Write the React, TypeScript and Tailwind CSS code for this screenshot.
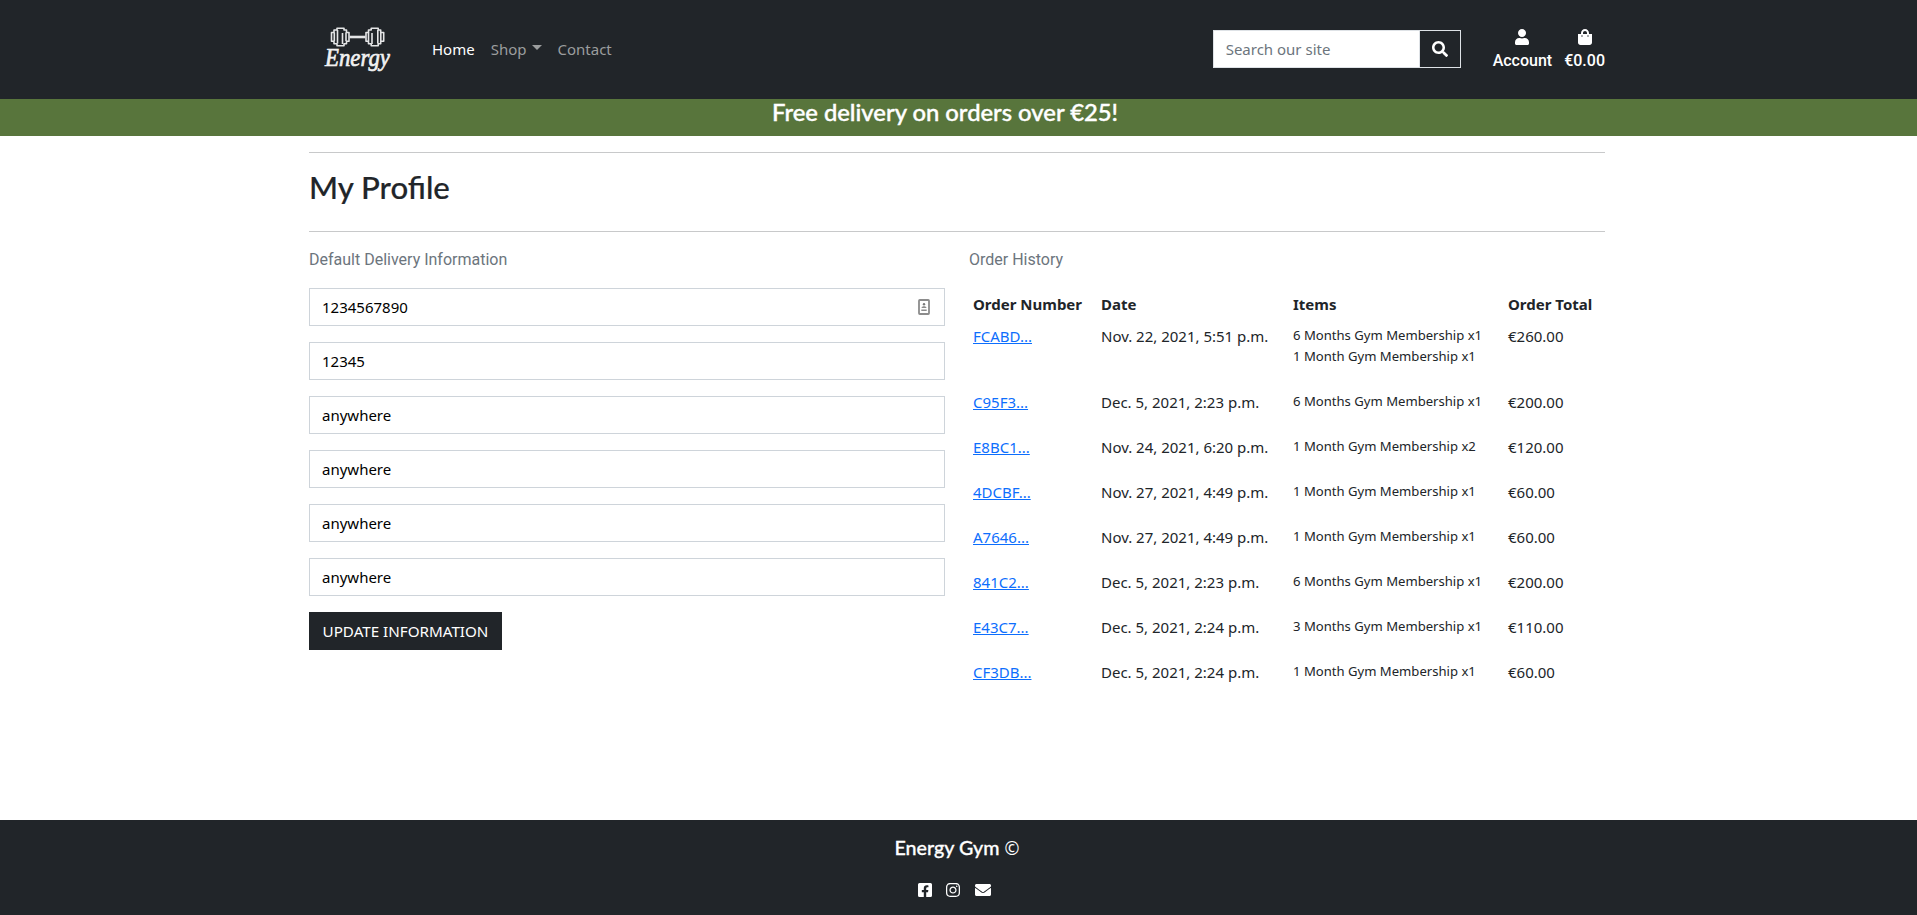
import { FaUser, FaShoppingBag, FaSearch, FaFacebookSquare, FaInstagram, FaEnvelope } from "react-icons/fa";

const fields = ["1234567890", "12345", "anywhere", "anywhere", "anywhere", "anywhere"];

const orders = [
  { id: "FCABD...", date: "Nov. 22, 2021, 5:51 p.m.", items: ["6 Months Gym Membership x1", "1 Month Gym Membership x1"], total: "€260.00" },
  { id: "C95F3...", date: "Dec. 5, 2021, 2:23 p.m.", items: ["6 Months Gym Membership x1"], total: "€200.00" },
  { id: "E8BC1...", date: "Nov. 24, 2021, 6:20 p.m.", items: ["1 Month Gym Membership x2"], total: "€120.00" },
  { id: "4DCBF...", date: "Nov. 27, 2021, 4:49 p.m.", items: ["1 Month Gym Membership x1"], total: "€60.00" },
  { id: "A7646...", date: "Nov. 27, 2021, 4:49 p.m.", items: ["1 Month Gym Membership x1"], total: "€60.00" },
  { id: "841C2...", date: "Dec. 5, 2021, 2:23 p.m.", items: ["6 Months Gym Membership x1"], total: "€200.00" },
  { id: "E43C7...", date: "Dec. 5, 2021, 2:24 p.m.", items: ["3 Months Gym Membership x1"], total: "€110.00" },
  { id: "CF3DB...", date: "Dec. 5, 2021, 2:24 p.m.", items: ["1 Month Gym Membership x1"], total: "€60.00" },
];

function Logo() {
  return (
    <svg width="74" height="60" viewBox="0 0 74 60" className="block overflow-visible" aria-label="Energy">
      <g fill="none" stroke="#e4e5e6" strokeWidth="1.6" strokeLinejoin="round">
        <path d="M11.5 12.5H14V10h3V8.3h7V10h2.5v2.5h2.5v8.7H26.500v2.500H24v2h-7v-2h-3v-2.500h-2.500z" />
        <path d="M14.300 12.500v8.500M17.500 10v13.500M22.500 13v11M26 12.500v8.500" />
        <path d="M46 12.500h2.500V10h2.700V8.300h7V10h2.500v2.500h3v8.700h-3v2.500h-2.500v2h-7v-2h-2.700v-2.500H46z" />
        <path d="M48.500 12.500v8.500M52 13v11M57.800 10v13.500M60.800 12.500v8.500" />
      </g>
      <path d="M29.500 17h16" stroke="#e4e5e6" strokeWidth="2.600" />
      <text
        x="5"
        y="45.500"
        textLength="65"
        lengthAdjust="spacingAndGlyphs"
        className="fill-[#f1f1f1] stroke-[#f1f1f1] font-['Liberation_Serif',serif] text-[26px] italic"
        strokeWidth="0.700"
      >
        Energy
      </text>
    </svg>
  );
}

function Header() {
  return (
    <header className="flex h-[99px] items-center bg-[#212529] pr-[312px] pl-[320px] text-[15px]">
      <Logo />
      <nav className="ml-[38px] flex items-center gap-4 text-[#9b9d9e]">
        <a className="text-white">Home</a>
        <a className="flex items-center">
          Shop
          <span className="mb-1 ml-[5px] h-0 w-0 border-x-[5px] border-t-[5px] border-x-transparent border-t-[#9b9d9e]" />
        </a>
        <a>Contact</a>
      </nav>
      <form className="mb-px ml-auto flex h-[38px] w-[248px] border border-[#dee2e6]">
        <input
          className="w-[205px] bg-white px-3 outline-none placeholder:text-[#6c757d]"
          placeholder="Search our site"
        />
        <button type="button" className="flex flex-1 items-center justify-center border-l border-[#dee2e6] text-white">
          <FaSearch size={16} />
        </button>
      </form>
      <div className="mb-0.5 ml-8 flex gap-3 font-['Roboto',sans-serif] text-base font-medium text-white">
        <a className="flex flex-col items-center leading-6">
          <FaUser size={16} className="mt-1 mb-1" />
          Account
        </a>
        <a className="flex flex-col items-center leading-6">
          <FaShoppingBag size={16} className="mt-1 mb-1" />
          €0.00
        </a>
      </div>
    </header>
  );
}

function ContactCardIcon() {
  return (
    <svg width="12" height="16" viewBox="0 0 12 16">
      <rect x="1" y="1" width="10" height="14" rx="0.800" fill="none" stroke="#8c8c8c" strokeWidth="1.800" />
      <circle cx="6" cy="5.300" r="1.200" fill="#777" />
      <path d="M3.500 9c0-2.500 5-2.500 5 0zM3.300 10.500h5.400v1.600H3.300z" fill="#8c8c8c" />
    </svg>
  );
}

export default function App() {
  return (
    <div className="flex h-[915px] flex-col bg-white font-['Noto_Sans','Open_Sans',sans-serif] text-[15px] text-[#212529]">
      <Header />
      <div className="h-[37px] bg-[#58753c] pr-[27px] text-center font-['Lato',sans-serif] text-[23.800px] leading-[27px] font-medium text-white [-webkit-text-stroke:0.4px]">
        Free delivery on orders over €25!
      </div>

      <main className="flex-1 pr-[312px] pl-[309px] pt-4">
        <hr className="border-t border-[#c8c9ca]" />
        <h2 className="mt-4 h-[62px] font-['Lato',sans-serif] text-[31.200px] leading-[36px] font-medium [-webkit-text-stroke:0.2px]">
          My Profile
        </h2>
        <hr className="border-t border-[#c8c9ca]" />

        <div className="mt-4 flex gap-6">
          <section className="w-[636px]">
            <p className="mb-4 font-['Roboto',sans-serif] text-base leading-6 text-[#6c757d]">Default Delivery Information</p>
            <form className="flex flex-col items-start gap-4">
              {fields.map((value, i) => (
                <div key={i} className="flex h-[38px] w-full items-center justify-between border border-[#ced4da] px-3 text-black">
                  <span>{value}</span>
                  {i === 0 && (
                    <span className="pr-0.5">
                      <ContactCardIcon />
                    </span>
                  )}
                </div>
              ))}
              <button type="button" className="h-[38px] w-[193px] bg-[#212529] text-[15.200px] text-white">
                UPDATE INFORMATION
              </button>
            </form>
          </section>

          <section className="w-[636px]">
            <p className="mb-4 font-['Roboto',sans-serif] text-base leading-6 text-[#6c757d]">Order History</p>
            <table className="w-full table-fixed border-collapse text-left leading-6">
              <colgroup>
                <col className="w-[128px]" />
                <col className="w-[192px]" />
                <col className="w-[215px]" />
                <col />
              </colgroup>
              <thead>
                <tr>
                  <th className="p-1 font-bold">Order Number</th>
                  <th className="p-1 font-bold">Date</th>
                  <th className="p-1 font-bold">Items</th>
                  <th className="p-1 font-bold">Order Total</th>
                </tr>
              </thead>
              <tbody>
                {orders.map((o) => (
                  <tr key={o.id} className="align-top">
                    <td className="p-1">
                      <a className="text-[#0d6efd] underline">{o.id}</a>
                    </td>
                    <td className="p-1">{o.date}</td>
                    <td className="px-1 pt-[5px] pb-[3px]">
                      <ul className="mb-4 text-[13.100px] leading-[21px] whitespace-nowrap">
                        {o.items.map((item) => (
                          <li key={item}>{item}</li>
                        ))}
                      </ul>
                    </td>
                    <td className="p-1">{o.total}</td>
                  </tr>
                ))}
              </tbody>
            </table>
          </section>
        </div>
      </main>

      <footer className="flex h-[95px] flex-col items-center bg-[#212529] pr-[3px] pt-4 text-white">
        <h5 className="font-['Lato',sans-serif] text-[19.700px] leading-6 font-medium [-webkit-text-stroke:0.3px]">
          Energy Gym{" "}
          <span className="font-['Open_Sans',sans-serif] text-[18px] font-normal [-webkit-text-stroke:0]">©</span>
        </h5>
        <div className="mt-[22px] flex items-center gap-3 pr-1.5">
          <FaFacebookSquare size={16} />
          <FaInstagram size={16} />
          <FaEnvelope size={16} className="ml-0.5" />
        </div>
      </footer>
    </div>
  );
}
